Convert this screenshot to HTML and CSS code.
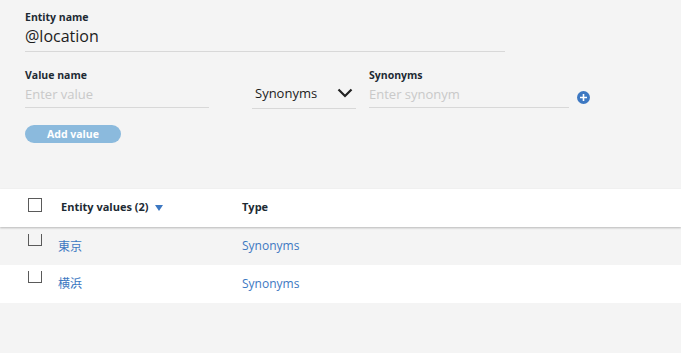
FILE: index.html
```html
<!DOCTYPE html>
<html>
<head>
<link rel="stylesheet" href="styles.css">
</head>
<body>
  <div class="entity-form">
    <div class="field entity-name">
      <label>Entity name</label>
      <div class="value-big">@location</div>
    </div>

    <div class="value-row">
      <div class="field value-name">
        <label>Value name</label>
        <input type="text" placeholder="Enter value">
      </div>
      <div class="type-select">
        <span>Synonyms</span>
        <svg width="16" height="10" viewBox="0 0 16 10"><path d="M1.5 1.5 L8 8 L14.5 1.5" fill="none" stroke="#222" stroke-width="2.2"/></svg>
      </div>
      <div class="field synonyms">
        <label>Synonyms</label>
        <input type="text" placeholder="Enter synonym">
      </div>
      <svg class="add-icon" width="13" height="13" viewBox="0 0 13 13">
        <circle cx="6.5" cy="6.5" r="6.5" fill="#3d78c2"/>
        <path d="M6.5 3 V10 M3 6.5 H10" stroke="#fff" stroke-width="1.6"/>
      </svg>
    </div>

    <button class="add-btn">Add value</button>
  </div>

  <div class="values-table">
    <div class="row head">
      <span class="check"></span>
      <span class="col-name">Entity values (2) <i class="sort"></i></span>
      <span class="col-type">Type</span>
    </div>
    <div class="row grey">
      <span class="check open"></span>
      <a class="col-name">東京</a>
      <a class="col-type">Synonyms</a>
    </div>
    <div class="row">
      <span class="check open"></span>
      <a class="col-name">横浜</a>
      <a class="col-type">Synonyms</a>
    </div>
  </div>
</body>
</html>
```

FILE: styles.css
```css
* {
  box-sizing: border-box;
  margin: 0;
  padding: 0;
}
body {
  background-color: #f4f4f4;
  font-family: "Open Sans", "Noto Sans CJK JP", sans-serif;
  color: #152935;
  height: 353px;
  overflow: hidden;
}
.entity-form {
  padding: 10px 0 0 25px;
}
.field label {
  display: block;
  font-size: 10.5px;
  font-weight: 700;
  line-height: 14px;
  color: #1d2a33;
}
.entity-name {
  width: 480px;
  border-bottom: 1px solid #d8d8d8;
}
.value-big {
  font-size: 16px;
  line-height: 25px;
  color: #1c1c1c;
  padding-bottom: 2px;
}

.value-row {
  display: flex;
  align-items: flex-end;
  margin-top: 16px;
}
.field input {
  display: block;
  width: 100%;
  border: none;
  border-bottom: 1px solid #d8d8d8;
  background: transparent;
  font-family: inherit;
  font-size: 13px;
  line-height: 18px;
  padding: 3px 0 4px;
  outline: none;
}
.field input::placeholder {
  color: #c9c9c9;
}
.value-name {
  width: 184px;
}
.type-select {
  width: 104px;
  margin-left: 43px;
  margin-bottom: -1px;
  display: flex;
  justify-content: space-between;
  align-items: center;
  border-bottom: 1px solid #d8d8d8;
  padding: 0 3px 5px 3px;
  font-size: 13px;
  line-height: 20px;
  color: #1c1c1c;
}
.synonyms {
  width: 200px;
  margin-left: 13px;
}
.add-icon {
  margin-left: 8px;
  margin-bottom: 4px;
}

.add-btn {
  display: block;
  margin-top: 17px;
  width: 96px;
  height: 18px;
  border: none;
  border-radius: 9px;
  background-color: #8bbadd;
  color: #fff;
  font-family: inherit;
  font-size: 10.5px;
  font-weight: 700;
}

.values-table {
  margin-top: 46px;
}
.row {
  display: flex;
  align-items: center;
  height: 38px;
  padding-left: 28px;
  padding-bottom: 2px;
  background-color: #fff;
  font-size: 12px;
}
.row.head {
  position: relative;
  z-index: 1;
  box-shadow: 0 1px 2px rgba(0, 0, 0, 0.25);
  font-size: 11px;
  font-weight: 700;
  color: #1d2a33;
  height: 38px;
  padding-bottom: 3px;
  margin-bottom: 1px;
}
.row.grey {
  background-color: #f4f4f4;
  height: 37px;
}
.check {
  width: 14px;
  height: 14px;
  border: 1px solid #5a5a5a;
  margin-top: -3px;
}
.check.open {
  border-top: none;
  height: 12px;
  margin-top: -12px;
}
.col-name {
  width: 181px;
  margin-left: 19px;
}
a.col-name {
  margin-left: 16px;
  width: 184px;
  color: #3d78c2;
}
.col-type {
  color: #1d2a33;
}
a.col-type {
  color: #3d78c2;
}
.sort {
  display: inline-block;
  width: 0;
  height: 0;
  margin-left: 4px;
  border-left: 4px solid transparent;
  border-right: 4px solid transparent;
  border-top: 6px solid #3d78c2;
}
```
